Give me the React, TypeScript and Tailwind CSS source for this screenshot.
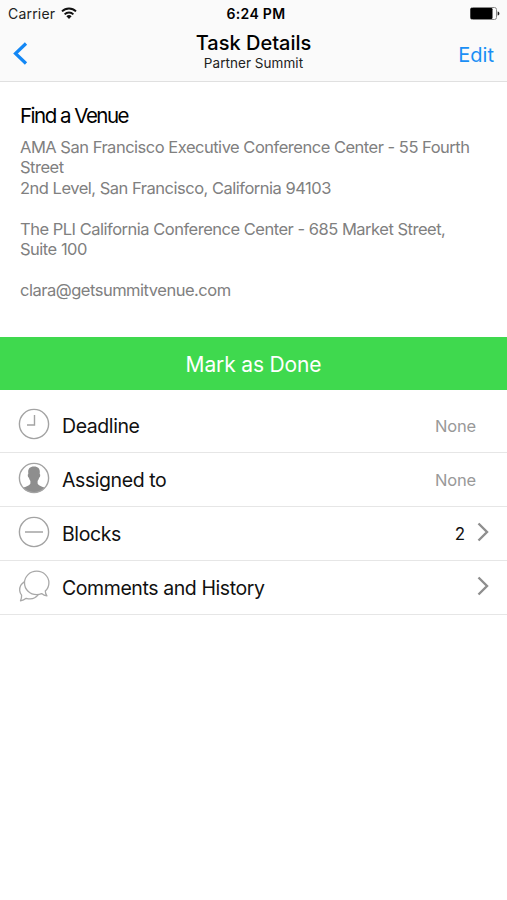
import type { ReactNode } from "react";

const NOTES = [
  "AMA San Francisco Executive Conference Center - 55 Fourth",
  "Street",
  "2nd Level, San Francisco, California 94103",
  "",
  "The PLI California Conference Center - 685 Market Street,",
  "Suite 100",
  "",
  "clara@getsummitvenue.com",
];

function WifiIcon() {
  return (
    <svg width="16" height="13" viewBox="0 0 16 13" fill="none" stroke="#111" strokeWidth="1.9">
      <path d="M1 4.400a10 10 0 0 1 14 0" />
      <path d="M3.600 7.300a6.200 6.200 0 0 1 8.800 0" />
      <path d="M8 12 5.400 9.300a3.700 3.700 0 0 1 5.200 0z" fill="#111" stroke="none" />
    </svg>
  );
}

function BatteryIcon() {
  return (
    <svg width="31" height="13" viewBox="0 0 31 13">
      <rect x="1.5" y="0.5" width="26" height="12" rx="2" fill="none" stroke="#888" />
      <rect x="1.5" y="1" width="22" height="11" rx="1.2" fill="#000" />
      <path d="M28.600 4.400c1.300.4 1.800 1.200 1.800 2.100s-.5 1.700-1.800 2.100z" fill="#222" />
    </svg>
  );
}

function ClockIcon() {
  return (
    <svg width="32" height="32" viewBox="0 0 32 32" fill="none" stroke="#a3a3a3" strokeWidth="1.4">
      <circle cx="16" cy="16" r="14.6" />
      <path d="M16.500 7v10H9" />
    </svg>
  );
}

function PersonIcon() {
  return (
    <svg width="32" height="32" viewBox="0 0 32 32" fill="none" stroke="#a3a3a3" strokeWidth="1.4">
      <path
        d="M16 4.400c4.200 0 6 2.300 5.800 5.700 0 .7-.1 1.300-.1 1.900.9.200.7 3.200-.6 3.800-.3 1.400-.8 2.400-1.500 3.200v2.600c1 2.400 4.500 2.800 7.300 4.400A14.600 14.600 0 0 1 16 30.600 14.600 14.600 0 0 1 5.100 26c2.800-1.600 6.300-2 7.300-4.400V19c-.7-.8-1.200-1.800-1.500-3.200-1.300-.6-1.500-3.600-.6-3.800 0-.6-.1-1.200-.1-1.900-.2-3.400 1.600-5.700 5.800-5.700z"
        fill="#8e8e8e"
        stroke="none"
      />
      <circle cx="16" cy="16" r="14.6" />
    </svg>
  );
}

function MinusIcon() {
  return (
    <svg width="32" height="32" viewBox="0 0 32 32" fill="none" stroke="#a3a3a3" strokeWidth="1.4">
      <circle cx="16" cy="16" r="14.6" />
      <path d="M7 16h18" strokeWidth="1.5" />
    </svg>
  );
}

function CommentsIcon() {
  return (
    <svg
      width="32"
      height="32"
      viewBox="0 0 32 32"
      fill="none"
      stroke="#a8a8a8"
      strokeWidth="1.3"
      strokeLinejoin="round"
    >
      <path d="M18.700 1.200c6.800 0 12.200 5.200 12.200 11.700 0 3.200-1.400 6-3.600 8.100 0 1.800.6 3.400 1.600 4.900-2.100-.1-3.900-1-5.300-2.300a13 13 0 0 1-4.900 1c-6.800 0-12.200-5.200-12.200-11.700S11.900 1.200 18.700 1.200z" />
      <path d="M6.600 11.600c-3.500 2.100-5.200 5.300-4.900 9 .2 1.800.8 3.300 1.900 4.600.1 2.100-.3 3.900-1.100 5.600 2.200-.2 4.100-1.100 5.700-2.500 4.500 1.300 9.200.3 12.300-3.900" />
    </svg>
  );
}

function Chevron() {
  return (
    <svg width="12" height="20" viewBox="0 0 12 20" fill="none" stroke="#8e8e8e" strokeWidth="2.4">
      <path d="M1.500 1.500 10 10l-8.500 8.500" />
    </svg>
  );
}

function Row({ icon, label, children }: { icon: ReactNode; label: string; children?: ReactNode }) {
  return (
    <div className="flex h-[54.2px] items-center border-b border-[#e6e6e6] pl-[18px]">
      <div className="-mt-[3px] shrink-0">{icon}</div>
      <span className="mt-[2px] ml-3 flex-1 text-[19.5px] tracking-[-0.42px] text-[#111]">
        {label}
      </span>
      {children}
    </div>
  );
}

export default function App() {
  return (
    <div className="h-[900px] w-full overflow-hidden bg-white font-['Inter',sans-serif] text-black">
      {/* Status + navigation bar */}
      <header className="h-[82px] border-b border-[#e0e0e0] bg-[#fafafa]">
        <div className="grid h-7 grid-cols-3 items-center pr-[7px] pb-px pl-2">
          <div className="flex items-center gap-[6px] text-[14px] tracking-[0.2px] text-[#222]">
            Carrier
            <WifiIcon />
          </div>
          <div className="pl-1 text-center text-[14px] font-semibold tracking-[0.3px]">6:24 PM</div>
          <div className="flex justify-end">
            <BatteryIcon />
          </div>
        </div>
        <div className="grid h-[53px] grid-cols-[100px_1fr_100px]">
          <button className="flex items-start pt-[14px] pl-[13px]">
            <svg width="15" height="23" viewBox="0 0 15 23" fill="none" stroke="#1287f5" strokeWidth="3.2">
              <path d="M13 1.500 2.500 11.500 13 21.500" />
            </svg>
          </button>
          <div className="flex flex-col items-center pt-[3px]">
            <div className="text-[20px] leading-6 font-medium">Task Details</div>
            <div className="text-[13.5px] leading-4 tracking-[0.05px] text-[#222]">
              Partner Summit
            </div>
          </div>
          <button className="flex justify-end pt-[14px] pr-[13px] text-[20px] leading-[26px] text-[#1a8ff5]">
            Edit
          </button>
        </div>
      </header>

      <section className="h-[255px] px-5 pt-[21px]">
        <h1 className="text-[20.5px] leading-[26px] tracking-[-1.5px]">Find a Venue</h1>
        <div className="mt-2 text-[16.5px] leading-[20.4px] tracking-[-0.49px] whitespace-nowrap text-[#808080]">
          {NOTES.map((line, i) => (
            <div key={i} className="h-[20.4px]">
              {line}
            </div>
          ))}
        </div>
      </section>

      <button className="flex h-[53px] w-full items-center justify-center bg-[#3fd94e] pt-[2px] text-[21px] tracking-[-0.15px] text-white">
        Mark as Done
      </button>

      <div className="pt-[8.6px]">
        <Row icon={<ClockIcon />} label="Deadline">
          <span className="mt-[2px] mr-[31px] text-[16.5px] tracking-[-0.2px] text-[#999]">None</span>
        </Row>
        <Row icon={<PersonIcon />} label="Assigned to">
          <span className="mt-px mr-[31px] text-[16.5px] tracking-[-0.2px] text-[#999]">None</span>
        </Row>
        <Row icon={<MinusIcon />} label="Blocks">
          <span className="mt-[2px] mr-3 text-[17px] text-[#111]">2</span>
          <div className="-mt-[3px] mr-[18px]">
            <Chevron />
          </div>
        </Row>
        <Row icon={<CommentsIcon />} label="Comments and History">
          <div className="-mt-[3px] mr-[18px]">
            <Chevron />
          </div>
        </Row>
      </div>
    </div>
  );
}
